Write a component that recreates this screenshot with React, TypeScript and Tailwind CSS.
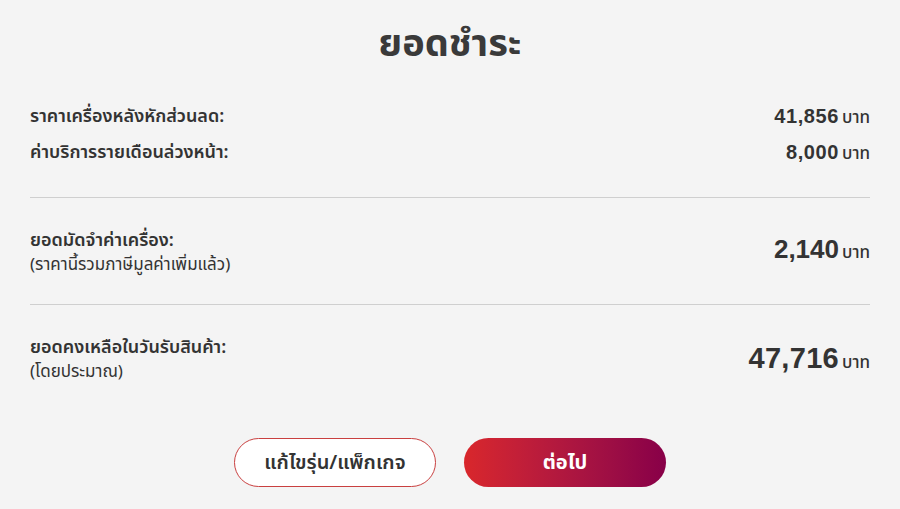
const num = { fontFamily: '"Liberation Sans", Arial, sans-serif' };

export default function App() {
  return (
    <div
      className="w-[900px] h-[509px] bg-[#f4f4f4] text-[#333] overflow-hidden"
      style={{ fontFamily: '"Noto Sans Thai", "Noto Sans", "DejaVu Sans", sans-serif' }}
    >
      <h1 className="pt-[22px] text-center text-[38px] font-bold leading-[46px] text-[#3a3a3a]">ยอดชำระ</h1>

      <div className="px-[30px] pt-[37px]">
        <div className="flex flex-col gap-[12px] pb-[32px]">
          <div className="flex h-[24px] items-center justify-between">
            <span className="text-[18px] font-semibold leading-[24px]">ราคาเครื่องหลังหักส่วนลด:</span>
            <span className="flex items-baseline gap-[3px] leading-[24px]">
              <span style={num} className="text-[20px] font-bold tracking-[0.6px]">41,856</span>
              <span className="text-[17px] font-medium">บาท</span>
            </span>
          </div>
          <div className="flex h-[24px] items-center justify-between">
            <span className="text-[18px] font-semibold leading-[24px]">ค่าบริการรายเดือนล่วงหน้า:</span>
            <span className="flex items-baseline gap-[3px] leading-[24px]">
              <span style={num} className="text-[20px] font-bold tracking-[0.6px]">8,000</span>
              <span className="text-[17px] font-medium">บาท</span>
            </span>
          </div>
        </div>

        <div className="border-t border-[#cfcfcf]" />

        <div className="flex items-center justify-between pt-[30px] pb-[26px]">
          <div className="flex flex-col">
            <span className="text-[18px] font-semibold leading-[25px]">ยอดมัดจำค่าเครื่อง:</span>
            <span className="text-[17px] leading-[25px]">(ราคานี้รวมภาษีมูลค่าเพิ่มแล้ว)</span>
          </div>
          <span className="flex items-baseline gap-[3px] leading-[32px] -mt-[4px]">
            <span style={num} className="text-[26px] font-bold">2,140</span>
            <span className="text-[17px] font-medium">บาท</span>
          </span>
        </div>

        <div className="border-t border-[#cfcfcf]" />

        <div className="flex items-center justify-between pt-[30px] pb-[53px]">
          <div className="flex flex-col">
            <span className="text-[18px] font-semibold leading-[25px]">ยอดคงเหลือในวันรับสินค้า:</span>
            <span className="text-[17px] leading-[25px]">(โดยประมาณ)</span>
          </div>
          <span className="flex items-baseline gap-[3px] leading-[34px]">
            <span style={num} className="text-[29px] font-bold tracking-[0.3px]">47,716</span>
            <span className="text-[17px] font-medium">บาท</span>
          </span>
        </div>

        <div className="flex justify-center gap-[28px]">
          <button className="w-[202px] h-[49px] rounded-full border border-[#c94040] bg-white text-[20px] font-semibold text-[#333]">
            แก้ไขรุ่น/แพ็กเกจ
          </button>
          <button className="w-[202px] h-[49px] rounded-full bg-gradient-to-r from-[#d9272b] to-[#880048] text-[20px] font-bold text-white">
            ต่อไป
          </button>
        </div>
      </div>
    </div>
  );
}
